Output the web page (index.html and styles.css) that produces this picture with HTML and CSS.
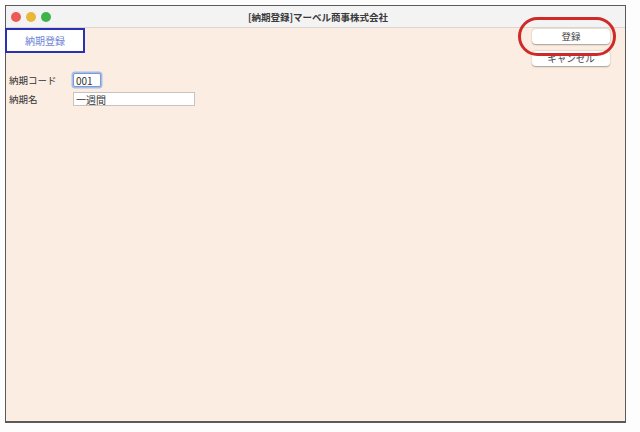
FILE: index.html
```html
<!DOCTYPE html>
<html lang="ja">
<head>
  <meta charset="UTF-8">
  <title>納期登録</title>
  <link rel="stylesheet" href="styles.css">
</head>
<body>
  <div class="window">
    <div class="titlebar">
      <div class="lights">
        <span class="light red"></span>
        <span class="light yellow"></span>
        <span class="light green"></span>
      </div>
      <div class="title">[納期登録]マーベル商事株式会社</div>
    </div>

    <div class="content">
      <div class="top-row">
        <div class="tab">納期登録</div>
        <div class="actions">
          <button class="btn">登録</button>
          <button class="btn">キャンセル</button>
        </div>
      </div>

      <div class="form">
        <div class="row">
          <label>納期コード</label>
          <input type="text" class="code focus" value="001">
        </div>
        <div class="row">
          <label>納期名</label>
          <input type="text" class="name" value="一週間">
        </div>
      </div>

      <!-- annotation circle around the save button -->
      <div class="marker"></div>
    </div>
  </div>
</body>
</html>
```

FILE: styles.css
```css
body {
  margin: 0;
  background: #fdfdfe;
  font-family: "Noto Sans CJK JP", "Noto Sans", sans-serif;
  color: #333;
}
.window {
  margin: 5px 0 0 5px;
  width: 619px;
  height: 415px;
  border: 1px solid #5a5a5a;
  border-bottom-width: 2px;
  display: flex;
  flex-direction: column;
  background: #fbede2;
}
.titlebar {
  height: 21px;
  background: #f4f3f3;
  border-bottom: 1px solid #dcd6d2;
  display: flex;
  align-items: center;
  position: relative;
}
.lights {
  display: flex;
  gap: 5px;
  padding-left: 5px;
}
.light {
  width: 10px;
  height: 10px;
  border-radius: 50%;
  display: block;
}
.light.red { background: #ec5a55; }
.light.yellow { background: #e9b73a; }
.light.green { background: #3fb44a; }
.title {
  flex: 1;
  text-align: center;
  font-size: 9.5px;
  font-weight: bold;
  color: #3a3a3a;
  margin-left: -40px;
}
.content {
  flex: 1;
  position: relative;
}
.top-row {
  display: flex;
  justify-content: space-between;
  align-items: flex-start;
}
.tab {
  width: 76px;
  height: 21px;
  margin-left: -1px;
  border: 2px solid #2a2fb6;
  background: #fff;
  color: #6f85d6;
  font-size: 10px;
  display: flex;
  align-items: center;
  justify-content: center;
}
.actions {
  display: flex;
  flex-direction: column;
  gap: 7px;
  padding: 1px 15px 0 0;
}
.btn {
  width: 78px;
  height: 15px;
  padding: 0;
  border: none;
  border-radius: 4px;
  background: #fff;
  box-shadow: 0 0.5px 1.5px rgba(0, 0, 0, 0.35);
  font-family: inherit;
  font-size: 9.5px;
  color: #444;
  line-height: 15px;
}
.form {
  padding: 7px 0 0 3px;
  display: flex;
  flex-direction: column;
  gap: 5px;
}
.row {
  display: flex;
  align-items: center;
}
.row label {
  width: 64px;
  font-size: 9.5px;
  color: #333;
}
.row input {
  height: 12px;
  padding: 0 2px;
  border: 1px solid #c9c3bf;
  background: #fff;
  font-family: inherit;
  font-size: 10px;
  color: #333;
  box-sizing: content-box;
}
.row input.code {
  width: 22px;
}
.row input.name {
  width: 116px;
}
.row input.focus {
  border-color: #7d9ad8;
  box-shadow: 0 0 0 1.5px #a9bde9;
  border-radius: 2px;
}
.marker {
  position: absolute;
  left: 512px;
  top: -11px;
  width: 92px;
  height: 33px;
  border: 3px solid #cf2a2a;
  border-radius: 20px;
}
```
